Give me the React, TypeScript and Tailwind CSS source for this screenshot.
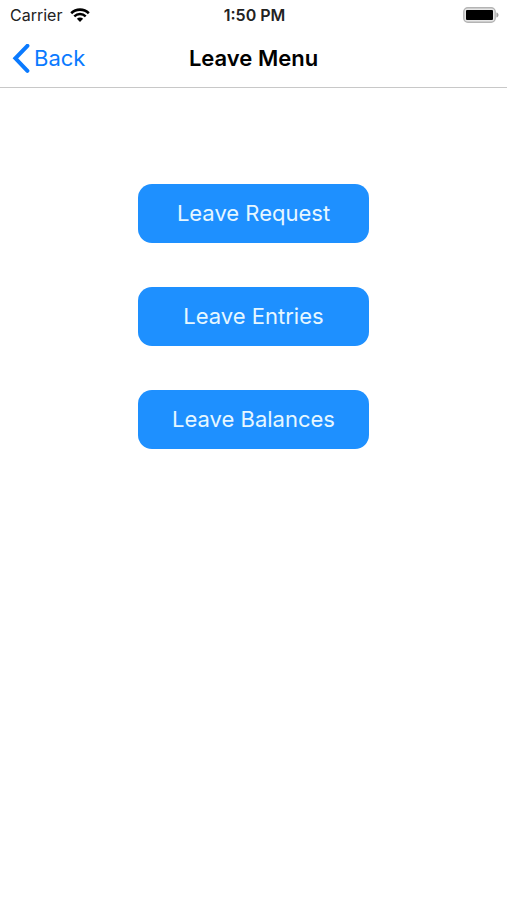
const menuItems = ["Leave Request", "Leave Entries", "Leave Balances"];

function WifiIcon() {
  return (
    <svg aria-hidden="true" viewBox="0 0 20 14" className="h-3.5 w-5" fill="none">
      <path d="M1.2 5.2a12.6 12.6 0 0 1 17.6 0" stroke="#000" strokeWidth="2.6" />
      <path d="M4.3 8.4a8.1 8.1 0 0 1 11.4 0" stroke="#000" strokeWidth="2.4" />
      <path d="M10 14 6.9 10.8a4.4 4.4 0 0 1 6.2 0Z" fill="#000" />
    </svg>
  );
}

function BatteryIcon() {
  return (
    <svg aria-hidden="true" viewBox="0 0 36 16" className="h-4 w-9">
      <rect x="0.8" y="0.8" width="31.4" height="14.4" rx="4" fill="#e6e6e6" stroke="#b4b4b4" strokeWidth="1.4" />
      <rect x="3" y="3" width="27" height="10" rx="1" fill="#000" />
      <path d="M33.4 5.5c2.8.6 2.8 4.4 0 5Z" fill="#a0a0a0" />
    </svg>
  );
}

function StatusBar() {
  return (
    <div className="grid h-7.5 grid-cols-3 items-center pr-2 pl-2.5 text-base text-[#222]">
      <div className="flex items-center gap-2">
        <span>Carrier</span>
        <WifiIcon />
      </div>
      <span className="text-center font-semibold">1:50 PM</span>
      <div className="flex justify-end">
        <BatteryIcon />
      </div>
    </div>
  );
}

function NavBar() {
  return (
    <header className="grid h-14.5 grid-cols-3 items-center border-b border-[#c8c8c8] px-3">
      <a href="#back" className="flex items-center gap-1 text-[22px] text-[#0a7aff]">
        <svg aria-hidden="true" viewBox="0 0 18 30" className="h-7.5 w-4.5" fill="none">
          <path d="M15.4 1.8 3.4 14.3l12 12.5" stroke="currentColor" strokeWidth="4" strokeLinecap="round" />
        </svg>
        Back
      </a>
      <h1 className="text-center text-[22px] font-semibold whitespace-nowrap text-black">Leave Menu</h1>
    </header>
  );
}

export default function App() {
  return (
    <div className="min-h-screen bg-white font-['Inter',sans-serif]">
      <StatusBar />
      <NavBar />
      <main className="flex flex-col items-center gap-11 pt-24">
        {menuItems.map((label) => (
          <button
            key={label}
            type="button"
            className="h-[59px] w-[231px] rounded-[14px] bg-[#1e90ff] text-[22px] text-[#e6f7ff]"
          >
            {label}
          </button>
        ))}
      </main>
    </div>
  );
}
